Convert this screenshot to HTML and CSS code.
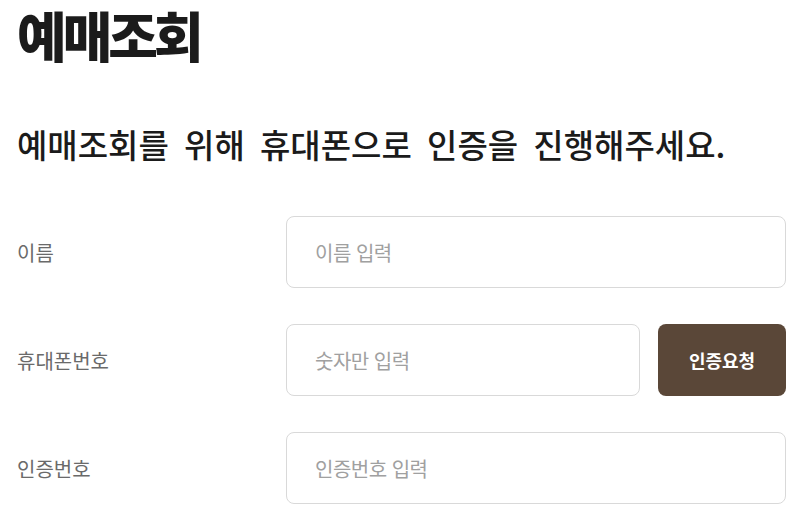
FILE: index.html
```html
<!DOCTYPE html>
<html lang="ko">
<head>
<meta charset="utf-8">
<title>예매조회</title>
<link rel="stylesheet" href="styles.css">
</head>
<body>
<main class="page">
  <h1 class="title">예매조회</h1>
  <h2 class="subtitle">예매조회를 위해 휴대폰으로 인증을 진행해주세요.</h2>
  <form class="form">
    <div class="row">
      <label class="label" for="name">이름</label>
      <div class="field">
        <input class="input" id="name" type="text" placeholder="이름 입력">
      </div>
    </div>
    <div class="row">
      <label class="label" for="phone">휴대폰번호</label>
      <div class="field">
        <input class="input" id="phone" type="text" placeholder="숫자만 입력">
        <button class="btn" type="button">인증요청</button>
      </div>
    </div>
    <div class="row">
      <label class="label" for="code">인증번호</label>
      <div class="field">
        <input class="input" id="code" type="text" placeholder="인증번호 입력">
      </div>
    </div>
  </form>
</main>
</body>
</html>
```

FILE: styles.css
```css
* { box-sizing: border-box; }
html, body { margin: 0; padding: 0; background: #fff; }
body {
  font-family: "Noto Sans CJK KR", "Noto Sans", sans-serif;
  color: #1d1d1d;
}
.page {
  padding: 6px 23px 0 17px;
}
.title {
  margin: 0;
  font-size: 54px;
  line-height: 58px;
  font-weight: 900;
  letter-spacing: -4px;
  color: #1b1b1b;
}
.subtitle {
  margin: 60px 0 0;
  font-size: 33px;
  line-height: 40px;
  font-weight: 500;
  letter-spacing: 0;
  word-spacing: 6px;
  white-space: nowrap;
  color: #1b1b1b;
}
.form {
  margin-top: 52px;
  display: flex;
  flex-direction: column;
  gap: 36px;
}
.row {
  display: grid;
  grid-template-columns: 269px 1fr;
  align-items: center;
}
.label {
  font-size: 20px;
  color: #6a6a6a;
  letter-spacing: 0;
}
.field {
  display: flex;
  gap: 18px;
}
.input {
  flex: 1;
  min-width: 0;
  height: 72px;
  border: 1px solid #d9d9d9;
  border-radius: 8px;
  padding: 0 28px;
  font-family: inherit;
  font-size: 20px;
  letter-spacing: -0.5px;
  color: #333;
  background: #fff;
  outline: none;
}
.input::placeholder { color: #a0a0a0; }
.btn {
  width: 128px;
  height: 72px;
  border: none;
  border-radius: 8px;
  background: #5a4738;
  color: #fff;
  font-family: inherit;
  font-size: 18px;
  font-weight: 700;
  letter-spacing: 0;
}
```
